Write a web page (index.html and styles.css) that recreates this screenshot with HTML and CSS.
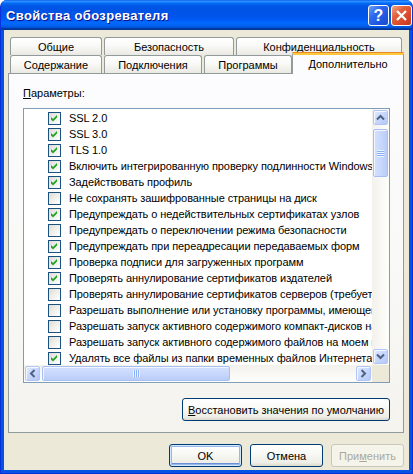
FILE: index.html
```html
<!DOCTYPE html>
<html>
<head>
<meta charset="utf-8">
<title>Свойства обозревателя</title>
<link rel="stylesheet" href="styles.css">
</head>
<body>
<div class="window">
  <div class="titlebar">
    <div class="title">Свойства обозревателя</div>
    <div class="tbtns">
      <div class="tbtn help">?</div>
      <div class="tbtn close">
        <svg width="13" height="13" viewBox="0 0 13 13"><path d="M2 2 L11 11 M11 2 L2 11" stroke="#fff" stroke-width="2.2" fill="none"/></svg>
      </div>
    </div>
  </div>
  <div class="client">
    <div class="tabs">
      <div class="tabrow">
        <div class="tab t-general">Общие</div>
        <div class="tab t-security">Безопасность</div>
        <div class="tab t-privacy">Конфиденциальность</div>
      </div>
      <div class="tabrow">
        <div class="tab t-content">Содержание</div>
        <div class="tab t-conn">Подключения</div>
        <div class="tab t-progs">Программы</div>
        <div class="tab t-adv sel">Дополнительно</div>
      </div>
    </div>
    <div class="panel">
      <div class="label"><u>П</u>араметры:</div>
      <div class="listbox">
        <div class="items">
          <div class="row"><span class="cb on"><svg viewBox="0 0 11 11"><path d="M2 4 L4 6 L8 2 L8 4.6 L4 8.6 L2 6.6 Z" fill="#21A121"/></svg></span>SSL 2.0</div>
          <div class="row"><span class="cb on"><svg viewBox="0 0 11 11"><path d="M2 4 L4 6 L8 2 L8 4.6 L4 8.6 L2 6.6 Z" fill="#21A121"/></svg></span>SSL 3.0</div>
          <div class="row"><span class="cb on"><svg viewBox="0 0 11 11"><path d="M2 4 L4 6 L8 2 L8 4.6 L4 8.6 L2 6.6 Z" fill="#21A121"/></svg></span>TLS 1.0</div>
          <div class="row"><span class="cb on"><svg viewBox="0 0 11 11"><path d="M2 4 L4 6 L8 2 L8 4.6 L4 8.6 L2 6.6 Z" fill="#21A121"/></svg></span>Включить интегрированную проверку подлинности Windows</div>
          <div class="row"><span class="cb on"><svg viewBox="0 0 11 11"><path d="M2 4 L4 6 L8 2 L8 4.6 L4 8.6 L2 6.6 Z" fill="#21A121"/></svg></span>Задействовать профиль</div>
          <div class="row"><span class="cb"></span>Не сохранять зашифрованные страницы на диск</div>
          <div class="row"><span class="cb on"><svg viewBox="0 0 11 11"><path d="M2 4 L4 6 L8 2 L8 4.6 L4 8.6 L2 6.6 Z" fill="#21A121"/></svg></span>Предупреждать о недействительных сертификатах узлов</div>
          <div class="row"><span class="cb"></span>Предупреждать о переключении режима безопасности</div>
          <div class="row"><span class="cb on"><svg viewBox="0 0 11 11"><path d="M2 4 L4 6 L8 2 L8 4.6 L4 8.6 L2 6.6 Z" fill="#21A121"/></svg></span>Предупреждать при переадресации передаваемых форм</div>
          <div class="row"><span class="cb on"><svg viewBox="0 0 11 11"><path d="M2 4 L4 6 L8 2 L8 4.6 L4 8.6 L2 6.6 Z" fill="#21A121"/></svg></span>Проверка подписи для загруженных программ</div>
          <div class="row"><span class="cb on"><svg viewBox="0 0 11 11"><path d="M2 4 L4 6 L8 2 L8 4.6 L4 8.6 L2 6.6 Z" fill="#21A121"/></svg></span>Проверять аннулирование сертификатов издателей</div>
          <div class="row"><span class="cb"></span>Проверять аннулирование сертификатов серверов (требуется перезагрузка)</div>
          <div class="row"><span class="cb"></span>Разрешать выполнение или установку программы, имеющей недопустимую подпись</div>
          <div class="row"><span class="cb"></span>Разрешать запуск активного содержимого компакт-дисков на моем компьютере</div>
          <div class="row"><span class="cb"></span>Разрешать запуск активного содержимого файлов на моем компьютере</div>
          <div class="row"><span class="cb on"><svg viewBox="0 0 11 11"><path d="M2 4 L4 6 L8 2 L8 4.6 L4 8.6 L2 6.6 Z" fill="#21A121"/></svg></span>Удалять все файлы из папки временных файлов Интернета при закрытии обозревателя</div>
        </div>
        <div class="vscroll">
          <div class="sbtn"><svg width="9" height="7" viewBox="0 0 9 7"><path d="M1 5.5 L4.5 2 L8 5.5" stroke="#4D6185" stroke-width="2" fill="none"/></svg></div>
          <div class="vthumb"><span class="hgrip"></span></div>
          <div class="sbtn down"><svg width="9" height="7" viewBox="0 0 9 7"><path d="M1 1.5 L4.5 5 L8 1.5" stroke="#4D6185" stroke-width="2" fill="none"/></svg></div>
        </div>
        <div class="hscroll">
          <div class="sbtn"><svg width="7" height="9" viewBox="0 0 7 9"><path d="M5.5 1 L2 4.5 L5.5 8" stroke="#4D6185" stroke-width="2" fill="none"/></svg></div>
          <div class="hthumb"><span class="vgrip"></span></div>
          <div class="sbtn right"><svg width="7" height="9" viewBox="0 0 7 9"><path d="M1.5 1 L5 4.5 L1.5 8" stroke="#4D6185" stroke-width="2" fill="none"/></svg></div>
        </div>
        <div class="corner"></div>
      </div>
      <div class="restore-row">
        <div class="btn restore"><u>В</u>осстановить значения по умолчанию</div>
      </div>
    </div>
    <div class="buttons">
      <div class="btn default">OK</div>
      <div class="btn">Отмена</div>
      <div class="btn disabled">При<u>м</u>енить</div>
    </div>
  </div>
</div>
</body>
</html>
```

FILE: styles.css
```css
html, body {
  margin: 0;
  padding: 0;
  background: #ffffff;
}

body {
  font-family: "Liberation Sans", Arial, sans-serif;
  font-size: 11px;
  color: #000;
}

.window {
  width: 413px;
  height: 474px;
  box-sizing: border-box;
  display: flex;
  flex-direction: column;
  background: #0553E2;
  border-radius: 7px 7px 0 0;
  overflow: hidden;
  border-left: 1px solid #0831D9;
  border-right: 1px solid #0831D9;
  border-bottom: 1px solid #0831D9;
}

.titlebar {
  height: 30px;
  flex: none;
  display: flex;
  align-items: center;
  justify-content: space-between;
  padding: 0 1px 0 5px;
  margin: 0 -1px;
  background: linear-gradient(to bottom, #0058EE 0%, #3593FF 4%, #288EFF 6%, #127DFF 8%, #036FFC 10%, #0262EE 14%, #0057E5 20%, #0054E3 24%, #0055EB 56%, #005BF5 66%, #026AFE 76%, #0062EF 86%, #0052D6 92%, #0040AB 94%, #003092 100%);
}

.title {
  color: #fff;
  font-family: "Liberation Sans", Arial, sans-serif;
  font-weight: bold;
  font-size: 13px;
  letter-spacing: 0.35px;
  text-shadow: 1px 1px 0 #0F1089;
  padding-top: 1px;
  padding-left: 1px;
}

.tbtns {
  display: flex;
  gap: 2px;
}

.tbtn {
  width: 21px;
  height: 21px;
  box-sizing: border-box;
  border: 1px solid #fff;
  border-radius: 3px;
  display: flex;
  align-items: center;
  justify-content: center;
  color: #fff;
}

.help {
  background: linear-gradient(135deg, #6FA0F8 0%, #2D6AEE 35%, #1E56DF 70%, #1A4DCB 100%);
  font-family: "Liberation Sans", Arial, sans-serif;
  font-weight: bold;
  font-size: 16px;
  line-height: 19px;
}

.close {
  background: linear-gradient(135deg, #F2A68A 0%, #E3613D 35%, #D8472A 70%, #C43A1C 100%);
}

.client {
  flex: 1;
  margin: 0 3px 3px 3px;
  background: #ECE9D8;
  padding-top: 7px;
  display: flex;
  flex-direction: column;
}

.tabs {
  padding-left: 6px;
  height: 36px;
  flex: none;
}

.tabrow {
  display: flex;
  height: 18px;
}

.tab {
  box-sizing: border-box;
  height: 18px;
  border: 1px solid #919B9C;
  border-bottom: none;
  border-radius: 3px 3px 0 0;
  background: linear-gradient(to bottom, #FFFFFF 0%, #FAFAF8 40%, #F0EFEA 80%, #E9E8E2 100%);
  text-align: center;
  line-height: 18px;
  margin-right: 2px;
  white-space: nowrap;
}

.t-general { width: 92px; }
.t-security { width: 130px; }
.t-privacy { width: 166px; }
.t-content { width: 92px; }
.t-conn { width: 98px; }
.t-progs { width: 88px; margin-right: 0; }

.tab.sel {
  width: 112px;
  height: 22px;
  margin-top: -3px;
  margin-right: 0;
  position: relative;
  z-index: 2;
  background: #FCFCFE;
  border-top: 3px solid #FFC83C;
  line-height: 18px;
}

.tab.sel::before {
  content: "";
  position: absolute;
  left: -1px;
  right: -1px;
  top: -3px;
  height: 1px;
  background: #E68B2C;
  border-radius: 3px 3px 0 0;
}

.panel {
  margin-left: 4px;
  width: 396px;
  height: 360px;
  box-sizing: border-box;
  border: 1px solid #919B9C;
  background: linear-gradient(to bottom, #FCFCFE 0%, #F8F8F6 60%, #F4F3EE 100%);
  padding: 12px 13px 0 14px;
  display: flex;
  flex-direction: column;
}

.label {
  height: 14px;
  line-height: 14px;
}

.listbox {
  margin-top: 8px;
  width: 367px;
  height: 275px;
  box-sizing: border-box;
  border: 1px solid #7F9DB9;
  background: #fff;
  display: grid;
  grid-template-columns: 348px 17px;
  grid-template-rows: 256px 17px;
}

.items {
  overflow: hidden;
  padding-top: 1px;
}

.row {
  height: 16px;
  display: flex;
  align-items: center;
  padding-left: 24px;
  white-space: nowrap;
  line-height: 16px;
  letter-spacing: -0.08px;
}

.cb {
  flex: none;
  width: 13px;
  height: 13px;
  box-sizing: border-box;
  border: 1px solid #1C5180;
  background: linear-gradient(135deg, #DCDBD5 0%, #EDEDE9 45%, #FFFFFF 100%);
  margin-right: 8px;
  display: flex;
}

.cb svg {
  width: 11px;
  height: 11px;
}

.vscroll {
  background: linear-gradient(to right, #F3F1EC, #FEFEFB);
  display: flex;
  flex-direction: column;
}

.hscroll {
  background: linear-gradient(to bottom, #F3F1EC, #FEFEFB);
  display: flex;
}

.corner {
  background: #ECE9D8;
}

.sbtn {
  flex: none;
  width: 15px;
  height: 15px;
  margin: 1px;
  box-sizing: border-box;
  border: 1px solid #B1C6F6;
  border-radius: 2px;
  background: linear-gradient(135deg, #E3EBFE 0%, #C9D8FC 45%, #B5C9F7 100%);
  box-shadow: inset 1px 1px 0 #F4F8FF;
  display: flex;
  align-items: center;
  justify-content: center;
}

.vscroll .down {
  margin-top: auto;
}

.hscroll .right {
  margin-left: auto;
}

.vthumb {
  flex: none;
  height: 48px;
  margin: 3px 1px 0 1px;
  box-sizing: border-box;
  border: 1px solid #A8BFF4;
  border-radius: 2px;
  background: linear-gradient(to right, #D4E0FD 0%, #C8D7FC 50%, #BACDF9 100%);
  box-shadow: inset 1px 1px 0 #F0F5FF;
  display: flex;
  align-items: center;
  justify-content: center;
}

.hthumb {
  flex: none;
  width: 188px;
  height: 15px;
  margin: 1px 0 1px 1px;
  box-sizing: border-box;
  border: 1px solid #A8BFF4;
  border-radius: 2px;
  background: linear-gradient(to bottom, #D4E0FD 0%, #C8D7FC 50%, #BACDF9 100%);
  box-shadow: inset 1px 1px 0 #F0F5FF;
  display: flex;
  align-items: center;
  justify-content: center;
}

.hgrip {
  width: 7px;
  height: 7px;
  background: repeating-linear-gradient(to bottom, #EEF4FE 0, #EEF4FE 1px, #8CB0F8 1px, #8CB0F8 2px);
}

.vgrip {
  width: 7px;
  height: 7px;
  background: repeating-linear-gradient(to right, #EEF4FE 0, #EEF4FE 1px, #8CB0F8 1px, #8CB0F8 2px);
}

.restore-row {
  display: flex;
  justify-content: flex-end;
  margin-top: 15px;
  padding-right: 0;
}

.btn {
  height: 23px;
  box-sizing: border-box;
  border: 1px solid #003C74;
  border-radius: 3px;
  background: linear-gradient(to bottom, #FFFFFF 0%, #F9F9F6 40%, #EEEDE6 85%, #DCD8CC 100%);
  display: flex;
  align-items: center;
  justify-content: center;
  white-space: nowrap;
  width: 73px;
}

.restore {
  width: 208px;
}

.buttons {
  display: flex;
  justify-content: flex-end;
  gap: 8px;
  margin-top: 11px;
  padding-right: 5px;
}

.btn.default {
  box-shadow: inset 0 0 0 1px #CEE7FF, inset 0 0 0 2px #98B8EA, inset 0 -2px 0 1px #6A8DD8;
}

.btn.disabled {
  border-color: #C9C7BA;
  color: #ACA899;
  background: #F5F4EA;
}
```
